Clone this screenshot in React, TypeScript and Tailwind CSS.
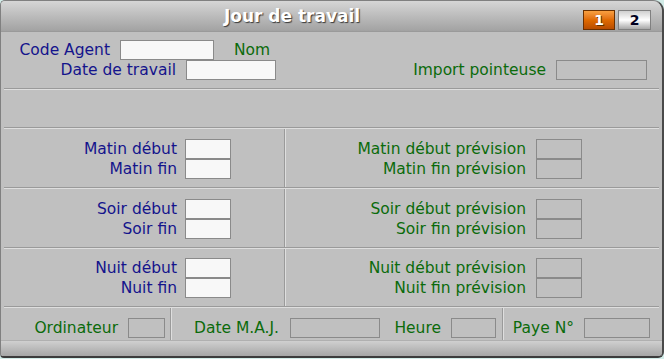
import React from "react";

const F = { fontFamily: '"DejaVu Sans", Verdana, sans-serif' };

function HG() {
  return <div className="h-[2px] border-t border-[#9a9a9a] bg-[#dedede]" />;
}

function VG() {
  return <div className="w-[2px] self-stretch border-l border-[#9a9a9a] bg-[#dedede]" />;
}

function WIn({ w }: { w: string }) {
  return <div className={`${w} h-[20px] bg-[#f8f8f8] border border-[#8a8a8a]`} />;
}
function GIn({ w }: { w: string }) {
  return <div className={`${w} h-[20px] bg-[#c0c0c0] border border-[#8a8a8a]`} />;
}

const blue = "text-[#14148c]";
const green = "text-[#0b6b0b]";

function LeftPair({ a, b }: { a: string; b: string }) {
  return (
    <div className="w-[280px] flex flex-col">
      <div className="flex items-center h-[20px]">
        <div className={`w-[173px] text-right whitespace-nowrap ${blue}`}>{a}</div>
        <div className="ml-[8px]"><WIn w="w-[46px]" /></div>
      </div>
      <div className="flex items-center h-[20px]">
        <div className={`w-[173px] text-right whitespace-nowrap ${blue}`}>{b}</div>
        <div className="ml-[8px]"><WIn w="w-[46px]" /></div>
      </div>
    </div>
  );
}

function RightPair({ a, b }: { a: string; b: string }) {
  return (
    <div className="flex-1 flex flex-col">
      <div className="flex items-center h-[20px]">
        <div className={`w-[240px] text-right whitespace-nowrap ${green}`}>{a}</div>
        <div className="ml-[10px]"><GIn w="w-[46px]" /></div>
      </div>
      <div className="flex items-center h-[20px]">
        <div className={`w-[240px] text-right whitespace-nowrap ${green}`}>{b}</div>
        <div className="ml-[10px]"><GIn w="w-[46px]" /></div>
      </div>
    </div>
  );
}

function Section({ h, pt, l, r }: { h: string; pt: string; l: [string, string]; r: [string, string] }) {
  return (
    <div className={`${h} flex`}>
      <div className={`w-[280px] ${pt}`}>
        <LeftPair a={l[0]} b={l[1]} />
      </div>
      <VG />
      <div className={`flex-1 ${pt}`}>
        <RightPair a={r[0]} b={r[1]} />
      </div>
    </div>
  );
}

export default function App() {
  return (
    <div className="w-[664px] h-[359px] bg-[#d2ece8] text-[15.5px] leading-[20px]" style={F}>
      <div className="w-[664px] h-[358px] flex flex-col overflow-hidden rounded-tl-[5px] rounded-tr-[11px] rounded-br-[6px] rounded-bl-[4px] border-t border-l border-[#808080] border-r-2 border-r-[#4a4a4a] border-b-2 border-b-[#3c3c3c] bg-[#c0c0c0]">
        {/* title bar */}
        <div className="h-[31px] flex items-start bg-gradient-to-b from-[#d6d6d6] to-[#a2a2a2] border-b border-[#9a9a9a]">
          <div className="w-[582px] pt-[5px] text-center text-[17px] leading-[20px] font-bold text-white [text-shadow:1px_1px_1px_#3a3a3a]">
            Jour de travail
          </div>
          <div className="flex mt-[9px] gap-[3px]">
            <div className="w-[32px] h-[20px] border border-[#6a3000] bg-gradient-to-b from-[#f8a040] via-[#e06a00] to-[#b84c00] text-white font-bold text-[14px] leading-[18px] text-center [text-shadow:1px_1px_0_#603000]">
              1
            </div>
            <div className="w-[33px] h-[20px] border border-[#808080] bg-gradient-to-b from-[#d0d0d0] via-[#ffffff] to-[#a8a8a8] text-[#000020] font-bold text-[14px] leading-[18px] text-center">
              2
            </div>
          </div>
        </div>

        {/* body */}
        <div className="flex-1 flex flex-col px-[3px]">
          <div className="h-[56px] pt-[8px]">
            <div className="flex items-center h-[20px]">
              <div className={`w-[106px] text-right whitespace-nowrap ${blue}`}>Code Agent</div>
              <div className="ml-[10px]"><WIn w="w-[94px]" /></div>
              <div className={`ml-[20px] ${green}`}>Nom</div>
            </div>
            <div className="flex items-center h-[20px]">
              <div className={`w-[172px] text-right whitespace-nowrap ${blue}`}>Date de travail</div>
              <div className="ml-[10px]"><WIn w="w-[90px]" /></div>
              <div className="flex-1" />
              <div className={`whitespace-nowrap ${green}`}>Import pointeuse</div>
              <div className="ml-[10px] mr-[12px]"><GIn w="w-[91px]" /></div>
            </div>
          </div>
          <HG />
          <div className="h-[37px]" />
          <HG />
          <Section h="h-[58px]" pt="pt-[10px]" l={["Matin début", "Matin fin"]} r={["Matin début prévision", "Matin fin prévision"]} />
          <HG />
          <Section h="h-[58px]" pt="pt-[10px]" l={["Soir début", "Soir fin"]} r={["Soir début prévision", "Soir fin prévision"]} />
          <HG />
          <Section h="h-[57px]" pt="pt-[9px]" l={["Nuit début", "Nuit fin"]} r={["Nuit début prévision", "Nuit fin prévision"]} />
          <HG />
          <div className="h-[32px] flex">
            <div className="w-[166px] pt-[10px] flex items-start">
              <div className={`w-[114px] text-right whitespace-nowrap ${green}`}>Ordinateur</div>
              <div className="ml-[10px]"><GIn w="w-[37px]" /></div>
            </div>
            <VG />
            <div className="w-[330px] pt-[10px] flex items-start">
              <div className={`w-[107px] text-right whitespace-nowrap ${green}`}>Date M.A.J.</div>
              <div className="ml-[11px]"><GIn w="w-[90px]" /></div>
              <div className={`w-[61px] text-right whitespace-nowrap ${green}`}>Heure</div>
              <div className="ml-[10px]"><GIn w="w-[45px]" /></div>
            </div>
            <VG />
            <div className="flex-1 pt-[10px] flex items-start">
              <div className={`w-[70px] text-right whitespace-nowrap ${green}`}>Paye N°</div>
              <div className="ml-[10px]"><GIn w="w-[66px]" /></div>
            </div>
          </div>
        </div>

        {/* bottom bar */}
        <div className="h-[16px] bg-gradient-to-b from-[#d0d0d0] to-[#a6a6a6] border-t border-[#b0b0b0]" />
      </div>
    </div>
  );
}
